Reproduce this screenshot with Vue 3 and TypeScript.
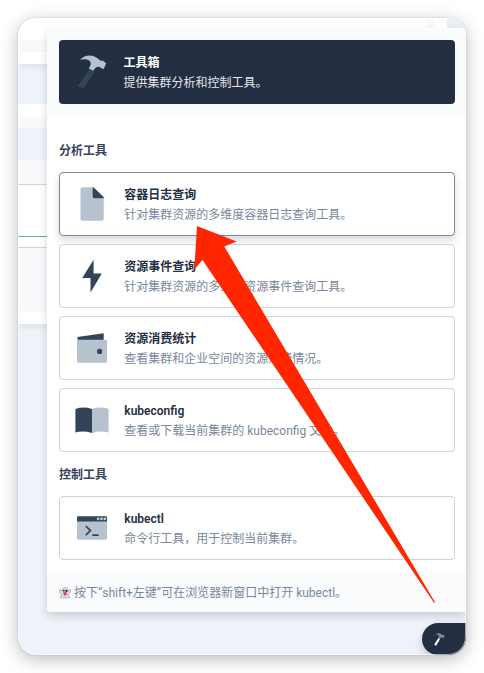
<script setup lang="ts">
type IconName = 'file' | 'bolt' | 'wallet' | 'book' | 'terminal'

interface Tool {
  icon: IconName
  title: string
  description: string
  active?: boolean
}

interface ToolGroup {
  name: string
  tools: Tool[]
}

const groups: ToolGroup[] = [
  {
    name: '分析工具',
    tools: [
      { icon: 'file', title: '容器日志查询', description: '针对集群资源的多维度容器日志查询工具。', active: true },
      { icon: 'bolt', title: '资源事件查询', description: '针对集群资源的多维度资源事件查询工具。' },
      { icon: 'wallet', title: '资源消费统计', description: '查看集群和企业空间的资源消费情况。' },
      { icon: 'book', title: 'kubeconfig', description: '查看或下载当前集群的 kubeconfig 文件。' },
    ],
  },
  {
    name: '控制工具',
    tools: [{ icon: 'terminal', title: 'kubectl', description: '命令行工具，用于控制当前集群。' }],
  },
]
</script>

<template>
  <main class="stage" lang="zh-CN">
    <div class="window">
      <div class="backdrop">
        <div class="top-strip"><i class="chip"></i><i class="corner"></i></div>
        <div class="band tint b1"></div>
        <div class="band white lifted b2"></div>
        <div class="band b3"></div>
        <div class="band white b2"></div>
        <div class="band tint b2"></div>
        <div class="band b4"></div>
        <div class="band tint b5"></div>
        <div class="chart"><div class="series"></div></div>
        <div class="band tint b6"></div>
        <div class="band white lifted b2"></div>
      </div>

      <section class="panel">
        <header class="head">
          <div class="banner">
            <svg class="icon" viewBox="0 0 40 40">
              <g transform="translate(-2 -2)">
                <path d="M19.8 18.8 24.6 21.4 13.4 39 7.8 36Z" fill="#324558" />
                <path d="M10 9.8C14.5 5 21.5 4 26.4 7.6L30 10.2Q31 11.2 32.5 10.5L36.2 13.2 33.6 19.2 29.4 17Q26 16 23.4 20.8L18.8 18.4C21.6 14.5 21.6 10.7 16.7 9.6 14.5 9.1 12.5 9.4 10 9.8Z" fill="#b6c2cd" />
              </g>
            </svg>
            <div class="copy">
              <strong>工具箱</strong>
              <p>提供集群分析和控制工具。</p>
            </div>
          </div>
        </header>

        <div class="body">
          <div v-for="group in groups" :key="group.name" class="group">
            <h3>{{ group.name }}</h3>
            <div class="list">
              <div v-for="tool in group.tools" :key="tool.title" class="card" :class="{ active: tool.active }">
                <svg class="icon" viewBox="0 0 40 40">
                  <g v-if="tool.icon === 'file'">
                    <path d="M10.5 3.2H20.7L31.7 13.8V34.2Q31.7 36.8 29 36.8H11.2Q8.5 36.8 8.5 34.2V5.6Q8.5 3.2 10.5 3.2Z" fill="#b6c2cd" />
                    <path d="M20.7 3.2H21.4L31.7 13V14.2H22.2Q20.7 14.2 20.7 12.4Z" fill="#324558" />
                  </g>
                  <path v-else-if="tool.icon === 'bolt'" d="M21.6 3.7V17.6H29.8L18.5 36.4V22.1H10.2Z" fill="#324558" />
                  <g v-else-if="tool.icon === 'wallet'">
                    <path d="M5.5 12.5V9.1L31.7 5.2V12.5Z" fill="#324558" />
                    <path d="M5 11.8H33.5Q35 11.8 35 13.3V33Q35 34.8 33.2 34.8H7.2Q5 34.8 5 32.8Z" fill="#b6c2cd" />
                    <circle cx="27.6" cy="23.4" r="2.6" fill="#324558" />
                  </g>
                  <g v-else-if="tool.icon === 'book'">
                    <path d="M3.4 9Q11.7 6.2 20 9V33Q11.7 30.5 3.4 32.4Z" fill="#324558" />
                    <path d="M20 9Q28.3 6.2 36.6 9V32.4Q28.3 30.5 20 33Z" fill="#b6c2cd" />
                  </g>
                  <g v-else>
                    <path d="M5 9.5H35V30.3Q35 31.7 33.6 31.7H6.4Q5 31.7 5 30.3Z" fill="#b6c2cd" />
                    <path d="M5 13.4V9.4Q5 8.2 6.2 8.2H33.8Q35 8.2 35 9.4V13.4Z" fill="#324558" />
                    <g fill="#c9d2da">
                      <circle cx="26.1" cy="10.8" r="1.4" />
                      <circle cx="29.5" cy="10.8" r="1.4" />
                      <circle cx="32.8" cy="10.8" r="1.4" />
                    </g>
                    <path d="M13.8 18 18.4 22.6 13.8 27.2M20.3 27.2H26.5" fill="none" stroke="#324558" stroke-width="1.7" />
                  </g>
                </svg>
                <div class="copy">
                  <strong>{{ tool.title }}</strong>
                  <p>{{ tool.description }}</p>
                </div>
              </div>
            </div>
          </div>
        </div>

        <footer class="foot">
          <svg class="ghost" viewBox="0 0 12 12">
            <path d="M6 .6C3.9.6 3.1 2 3.1 4.3L2.2 4.2C2.4 2.8 1.3 2.2.8 2.8L.4 4.3C.5 5.6 1.8 6.7 2.8 7L2.2 9 1 10.8 3.1 10.2 4.2 11.3 6 10.5 7.8 11.3 8.9 10.2 11 10.8 9.8 9 9.2 7C10.2 6.7 11.5 5.6 11.6 4.3L11.2 2.8C10.7 2.2 9.6 2.8 9.8 4.2L8.9 4.3C8.9 2 8.1.6 6 .6Z" fill="#e2e2e4" stroke="#8e9094" stroke-width=".6" />
            <circle cx="4.8" cy="3.7" r=".9" fill="#24242a" />
            <circle cx="7.4" cy="3.9" r="1.1" fill="#24242a" />
            <path d="M4.4 5.8H7.7V7.8Q6 9.9 4.5 7.8Z" fill="#f23d83" />
            <path d="M4.3 5.7H7.8" stroke="#4a2533" stroke-width=".6" />
          </svg>
          <span>按下“shift+左键”可在浏览器新窗口中打开 kubectl。</span>
        </footer>
      </section>

      <div class="launcher">
        <svg class="mini" viewBox="0 0 40 40">
          <path d="M19.8 18.8 24 21.2 13.8 39 8.6 36Z" fill="#fff" />
          <path d="M10.5 9.8C15 5.6 21.5 4.2 26.4 8.1L29.7 10.2Q30.5 11.2 32.5 10.3L36.4 13 33.3 19 29.2 16.8Q26 16 23.8 20.8L19.2 18.4C21.6 14.5 21.6 10.7 16.7 9.4 14.5 8.9 12.5 9.2 10.5 9.8Z" fill="#858b96" />
        </svg>
      </div>
    </div>

    <svg class="arrow" viewBox="0 0 484 673">
      <path d="M197 226 236.6 241.6 224.3 246.5 435 602.2 434.2 603 202.5 260 194.3 269.4Z" fill="#ff2600" />
    </svg>
  </main>
</template>

<style>
body {
  margin: 0;
  background: #fff;
}
</style>

<style scoped>
* {
  box-sizing: border-box;
}
.stage {
  position: relative;
  width: 484px;
  height: 673px;
  padding: 18px;
  overflow: hidden;
  background: #fff;
  font-family: Roboto, 'Noto Sans CJK SC', sans-serif;
  font-size: 12px;
  line-height: 20px;
}
.window {
  position: relative;
  width: 448px;
  height: 637px;
  border-radius: 18px;
  overflow: hidden;
  background: #edf3f8;
  box-shadow: 0 0 2px rgba(0, 0, 0, 0.14), 0 4px 18px rgba(0, 0, 0, 0.27);
}
.window::after {
  content: '';
  position: absolute;
  inset: 0;
  border: 1px solid rgba(255, 255, 255, 0.6);
  border-radius: 18px;
}
.backdrop {
  display: flex;
  flex-direction: column;
}
.top-strip {
  display: flex;
  justify-content: flex-end;
  gap: 12px;
  height: 22px;
  background: #fff;
}
.chip {
  width: 8px;
  background: #f7f9fb;
}
.corner {
  width: 19px;
  background: #e8eff4;
}
.band {
  flex: none;
}
.white {
  background: #fff;
}
.tint {
  background: #f9fafc;
}
.lifted {
  box-shadow: 0 3px 6px rgba(36, 46, 66, 0.08);
}
.b1 {
  height: 12px;
}
.b2 {
  height: 12px;
}
.b3 {
  height: 40px;
}
.b4 {
  height: 32px;
}
.b5 {
  height: 24px;
}
.b6 {
  height: 64px;
}
.chart {
  height: 64px;
  padding-top: 51px;
  background: #fff;
  border-top: 1px solid #ccd3db;
  border-bottom: 1px solid #ccd3db;
}
.series {
  height: 1px;
  background: #55bc8a;
}
.panel {
  position: absolute;
  top: 10px;
  left: 29px;
  width: 419px;
  height: 584px;
  display: flex;
  flex-direction: column;
  border-radius: 4px 0 0 4px;
  overflow: hidden;
  background: #fff;
  box-shadow: 0 4px 8px rgba(36, 46, 66, 0.18);
}
.head {
  height: 88px;
  padding: 12px 11px 12px 12px;
  background: #f9fbfd;
}
.banner,
.card {
  display: flex;
  align-items: center;
  gap: 12.3px;
  padding: 0 12px;
  border-radius: 4px;
}
.banner {
  height: 64px;
  padding: 0 13px;
  gap: 11.5px;
  background: #242e42;
  color: #e3e5e9;
}
.banner strong {
  color: #fff;
}
.icon {
  flex: none;
  width: 40px;
  height: 40px;
}
.copy {
  padding-top: 2px;
}
.copy strong {
  display: block;
  font-weight: 600;
}
.copy p {
  margin: 0;
}
.body {
  flex: 1;
  padding: 25px 11px 0 12px;
}
.group h3 {
  margin: 0 0 11px;
  font-size: 12px;
  font-weight: 600;
  line-height: 20px;
  color: #36435c;
}
.group + .group {
  margin-top: 12.7px;
}
.list {
  display: flex;
  flex-direction: column;
  gap: 8.1px;
}
.card {
  height: 64px;
  border: 1px solid #ccd3db;
  background: #fff;
}
.card strong {
  color: #242e42;
}
.card p {
  color: #79879c;
}
.card.active {
  border-color: #79879c;
  box-shadow: 0 4px 8px rgba(36, 46, 66, 0.18);
}
.foot {
  display: flex;
  align-items: center;
  gap: 3px;
  height: 40px;
  padding: 1px 12px 0;
  background: #f9fbfd;
  color: #79879c;
}
.ghost {
  width: 12px;
  height: 12px;
}
.launcher {
  position: absolute;
  right: 0;
  bottom: 0;
  width: 44px;
  height: 32px;
  padding: 8px 9px;
  border-radius: 16px 0 16px 16px;
  background: #242e42;
  box-shadow: 0 4px 8px rgba(36, 46, 66, 0.2);
}
.mini {
  display: block;
  width: 15px;
  height: 15px;
}
.arrow {
  position: absolute;
  inset: 0;
  width: 484px;
  height: 673px;
}
</style>
